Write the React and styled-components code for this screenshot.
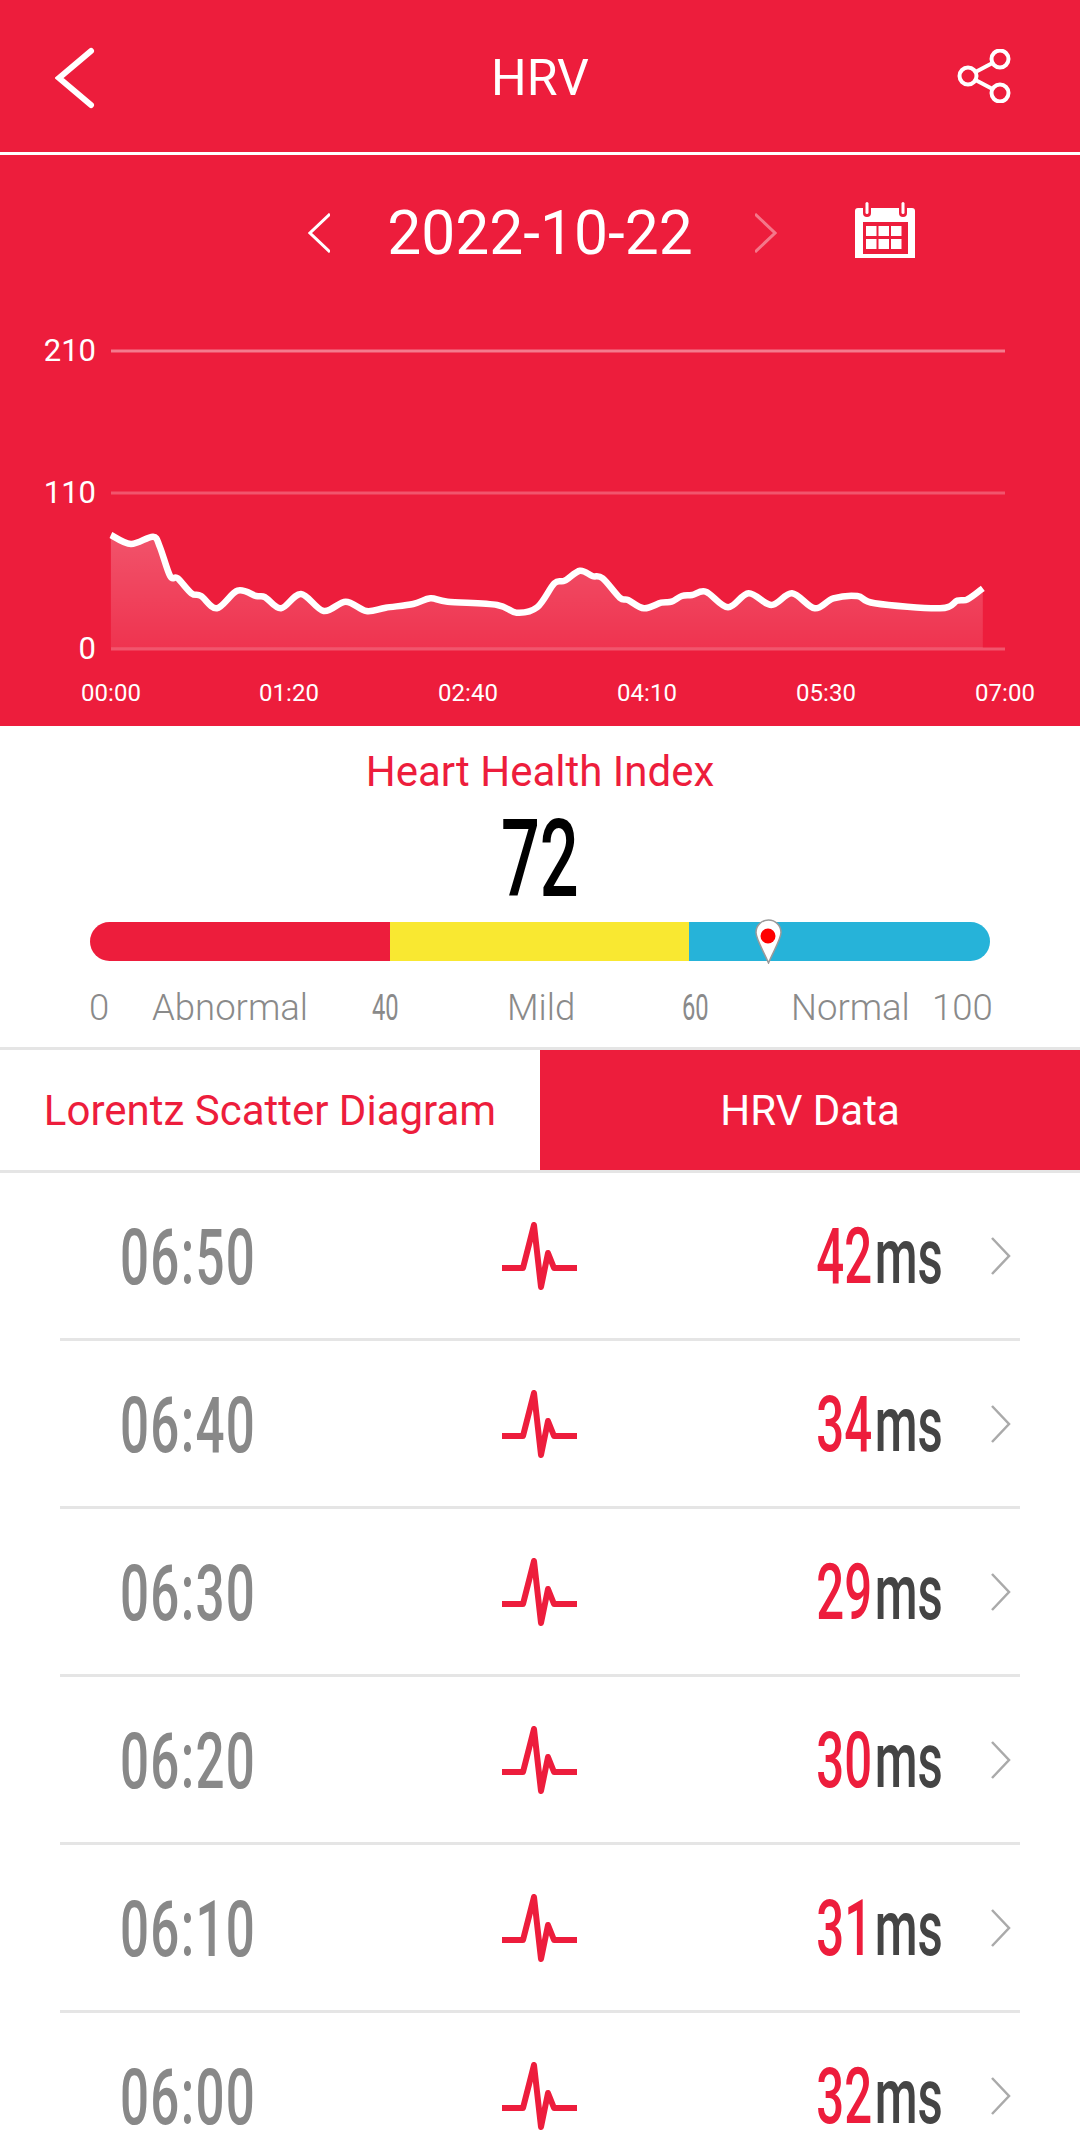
import React from "react";
import styled, { createGlobalStyle } from "styled-components";

const RED = "#ed1d3c";

const GlobalStyle = createGlobalStyle`
  html, body {
    margin: 0;
    padding: 0;
    height: 2143px;
    overflow: hidden;
    background: #fff;
    font-family: Roboto, "Liberation Sans", sans-serif;
  }
`;

const Page = styled.div`
  width: 1080px;
  height: 2143px;
  overflow: hidden;
  background: #fff;
`;

const Header = styled.header`
  height: 152px;
  background: ${RED};
  border-bottom: 3px solid #fff;
  display: grid;
  grid-template-columns: 1fr auto 1fr;
  align-items: center;
  padding: 0 69px;
`;

const BackIcon = styled.svg`
  display: block;
  margin: 4px 0 0 -14px;
`;

const Title = styled.h1`
  margin: 4px 0 0;
  font-size: 50px;
  font-weight: 400;
  color: #fff;
  line-height: 1;
`;

const ShareWrap = styled.div`
  justify-self: end;
  display: flex;
`;

const RedPanel = styled.section`
  background: ${RED};
  height: 571px;
`;

const DateRow = styled.div`
  height: 155px;
  display: grid;
  grid-template-columns: 1fr auto 1fr;
  align-items: center;
  column-gap: 60px;
`;

const DatePrev = styled.div`
  justify-self: end;
  display: flex;
  margin-right: -3px;
`;

const DateText = styled.div`
  font-size: 60.5px;
  line-height: 1;
  color: #fff;
  margin-top: 4px;
`;

const DateNext = styled.div`
  display: flex;
  align-items: center;
  gap: 78px;
  margin-left: 2px;
`;

const Calendar = styled.svg`
  display: block;
  margin-top: -6px;
`;

const ChartSvg = styled.svg`
  display: block;
`;

const AxisLabel = styled.text`
  fill: #fff;
  font-family: Roboto, sans-serif;
  font-size: ${(p) => p.$size}px;
`;

const IndexPanel = styled.section`
  height: 321px;
  padding-top: 22px;
  box-sizing: border-box;
`;

const IndexTitle = styled.div`
  text-align: center;
  color: ${RED};
  font-size: 42px;
  line-height: 48px;
`;

const Narrow = styled.span`
  display: inline-block;
  transform: scaleX(${(p) => p.$x || 0.65});
  transform-origin: ${(p) => p.$origin || "left"} center;
  white-space: nowrap;
`;

const IndexValue = styled.div`
  margin-top: 14px;
  text-align: center;
  font-size: 107px;
  line-height: 100px;
  font-weight: 500;
  color: #000;
`;

const BarWrap = styled.div`
  position: relative;
  margin: 12px 90px 0;
  height: 39px;
`;

const Bar = styled.div`
  display: flex;
  height: 100%;
  border-radius: 20px;
  overflow: hidden;
`;

const Segment = styled.div`
  flex: ${(p) => p.$size} 0 0;
  background: ${(p) => p.$color};
`;

const Pin = styled.svg`
  position: absolute;
  left: ${(p) => p.$left}px;
  top: -3px;
`;

const Legend = styled.div`
  margin: 25px 89px 0;
  display: grid;
  grid-template-columns: 63px 220px 135px 175px 109px 141px 58px;
  color: #8a8a8a;
  font-size: 36.5px;
  line-height: 44px;
  font-weight: 300;
`;

const LegendMark = styled(Narrow)`
  font-weight: 400;
`;

const Tabs = styled.div`
  display: grid;
  grid-template-columns: 1fr 1fr;
  border-top: 3px solid #e5e5e5;
  border-bottom: 3px solid #e5e5e5;
`;

const Tab = styled.div`
  height: 120px;
  display: flex;
  align-items: center;
  justify-content: center;
  font-size: 42px;
  color: ${(p) => (p.$active ? "#fff" : RED)};
  background: ${(p) => (p.$active ? RED : "#fff")};
`;

const List = styled.div`
  padding: 0 60px;
`;

const Row = styled.div`
  height: 165px;
  border-bottom: 3px solid #e5e5e5;
  display: grid;
  grid-template-columns: 1fr auto 1fr;
  align-items: center;
  font-size: 78px;
  line-height: 1;
  font-weight: 500;
`;

const Time = styled.div`
  color: #888;
  padding: 4px 0 0 60px;
  letter-spacing: 2px;
`;

const Pulse = styled.svg`
  display: block;
  margin-left: -2px;
`;

const RowEnd = styled.div`
  display: flex;
  justify-content: flex-end;
  align-items: center;
  padding-right: 9px;
`;

const Value = styled(Narrow)`
  margin-top: 3px;
`;

const Num = styled.span`
  color: ${RED};
`;

const Unit = styled.span`
  color: #444;
  margin-left: 4px;
`;

const Chevron = styled.svg`
  display: block;
  margin-left: ${(p) => p.$gap || 0}px;
`;

const raw = [
  [161, 645], [190, 672], [222, 650], [232, 680], [247, 768], [258, 775], [278, 820], [292, 828],
  [315, 865], [345, 812], [372, 828], [385, 832], [408, 865], [437, 822], [470, 873], [502, 845],
  [532, 873], [560, 863], [600, 852], [625, 835], [650, 845], [722, 855], [750, 878], [780, 862],
  [805, 790], [820, 782], [842, 752], [860, 768], [875, 775], [900, 833], [912, 840], [935, 865],
  [960, 848], [975, 845], [990, 828], [1005, 825], [1025, 815], [1057, 862], [1087, 820], [1120, 855],
  [1150, 820], [1183, 865], [1210, 835], [1245, 828], [1270, 850], [1365, 865], [1390, 842], [1405, 838],
  [1427, 805],
];

// trace points were read off a stretched crop, so scale back to page pixels
const points = raw.map(([x, y]) => [x / 1.452, y / 3 + 320]);

const smoothPath = (pts) => {
  let d = `M${pts[0][0].toFixed(1)} ${pts[0][1].toFixed(1)}`;
  for (let i = 0; i < pts.length - 1; i++) {
    const p0 = pts[i - 1] || pts[i];
    const p1 = pts[i];
    const p2 = pts[i + 1];
    const p3 = pts[i + 2] || p2;
    const c1x = p1[0] + (p2[0] - p0[0]) / 6;
    const c1y = p1[1] + (p2[1] - p0[1]) / 6;
    const c2x = p2[0] - (p3[0] - p1[0]) / 6;
    const c2y = p2[1] - (p3[1] - p1[1]) / 6;
    d += `C${c1x.toFixed(1)} ${c1y.toFixed(1)} ${c2x.toFixed(1)} ${c2y.toFixed(1)} ${p2[0].toFixed(1)} ${p2[1].toFixed(1)}`;
  }
  return d;
};

const linePath = smoothPath(points);
const firstX = points[0][0].toFixed(1);
const lastX = points[points.length - 1][0].toFixed(1);
const areaPath = `${linePath}L${lastX} 648L${firstX} 648Z`;

const gridLines = [
  { y: 351, label: "210", opacity: 0.42 },
  { y: 493, label: "110", opacity: 0.25 },
  { y: 649, label: "0", opacity: 0.25 },
];

const timeLabels = [
  ["00:00", 111],
  ["01:20", 289],
  ["02:40", 468],
  ["04:10", 647],
  ["05:30", 826],
  ["07:00", 1005],
];

const rows = [
  ["06:50", 42],
  ["06:40", 34],
  ["06:30", 29],
  ["06:20", 30],
  ["06:10", 31],
  ["06:00", 32],
];

const Chart = () => (
  <ChartSvg width="1080" height="416" viewBox="0 310 1080 416">
    <defs>
      <linearGradient id="area" x1="0" y1="0" x2="0" y2="1">
        <stop offset="0" stopColor="#fff" stopOpacity="0.24" />
        <stop offset="1" stopColor="#fff" stopOpacity="0.1" />
      </linearGradient>
    </defs>
    {gridLines.map((g) => (
      <g key={g.label}>
        <line x1="111" x2="1005" y1={g.y} y2={g.y} stroke="#fff" strokeOpacity={g.opacity} strokeWidth="3" />
        <AxisLabel $size={31} x="96" y={g.y + 10} textAnchor="end">
          {g.label}
        </AxisLabel>
      </g>
    ))}
    <path d={areaPath} fill="url(#area)" />
    <path d={linePath} fill="none" stroke="#fff" strokeWidth="6.5" strokeLinejoin="round" />
    {timeLabels.map(([t, x]) => (
      <AxisLabel key={t} $size={24} x={x} y="701" textAnchor="middle">
        {t}
      </AxisLabel>
    ))}
  </ChartSvg>
);

const ShareIcon = () => (
  <svg width="54" height="54" viewBox="0 0 54 54" fill="none" stroke="#fff" strokeWidth="4">
    <circle cx="43" cy="10" r="8.5" />
    <circle cx="11" cy="27" r="8.5" />
    <circle cx="43" cy="44" r="8.5" />
    <path d="M18.5 23L35.5 14M18.5 31L35.5 40" />
  </svg>
);

const CalendarIcon = () => (
  <Calendar width="60" height="56" viewBox="0 0 60 56">
    <path d="M3 6H57a3 3 0 0 1 3 3V56H0V9a3 3 0 0 1 3-3Z" fill="#fff" />
    <rect x="8" y="20" width="45" height="32" fill={RED} />
    {[11, 23.5, 36].map((x) =>
      [24, 37].map((y) => <rect key={`${x}-${y}`} x={x} y={y} width="10.5" height="10" fill="#fff" />)
    )}
    <rect x="8" y="0" width="8" height="15" rx="4" fill={RED} />
    <rect x="44" y="0" width="8" height="15" rx="4" fill={RED} />
    <rect x="10.5" y="0" width="3" height="12" rx="1.5" fill="#fff" />
    <rect x="46.5" y="0" width="3" height="12" rx="1.5" fill="#fff" />
  </Calendar>
);

const PulseIcon = () => (
  <Pulse width="75" height="68" viewBox="0 0 75 68" fill="none">
    <path
      d="M0 46H21L32 3L39 65L46 31L52 46H75"
      stroke={RED}
      strokeWidth="6"
      strokeLinejoin="round"
    />
  </Pulse>
);

const MapPin = () => (
  <Pin $left={665} width="27" height="45" viewBox="0 0 27 45">
    <path
      d="M13.5 1C6.5 1 1 6.5 1 13.5C1 20 9 33 13.5 44C18 33 26 20 26 13.5C26 6.5 20.5 1 13.5 1Z"
      fill="#fff"
      stroke="#9a9a9a"
      strokeWidth="1.5"
    />
    <circle cx="13" cy="17" r="7.5" fill="#f00" />
  </Pin>
);

const App = () => (
  <Page>
    <GlobalStyle />
    <Header>
      <BackIcon width="40" height="62" viewBox="0 0 40 62" fill="none" stroke="#fff" strokeWidth="6" strokeLinecap="round">
        <path d="M36 4L4 31L36 58" />
      </BackIcon>
      <Title>HRV</Title>
      <ShareWrap>
        <ShareIcon />
      </ShareWrap>
    </Header>

    <RedPanel>
      <DateRow>
        <DatePrev>
          <svg width="22" height="40" viewBox="0 0 22 40" fill="none" stroke="#fff" strokeWidth="3">
            <path d="M22 1L2 20L22 39" />
          </svg>
        </DatePrev>
        <DateText>2022-10-22</DateText>
        <DateNext>
          <svg width="22" height="40" viewBox="0 0 22 40" fill="none" stroke="#fff" strokeOpacity="0.4" strokeWidth="3">
            <path d="M0 1L20 20L0 39" />
          </svg>
          <CalendarIcon />
        </DateNext>
      </DateRow>
      <Chart />
    </RedPanel>

    <IndexPanel>
      <IndexTitle>Heart Health Index</IndexTitle>
      <IndexValue>
        <Narrow $x={0.64} $origin="center">
          72
        </Narrow>
      </IndexValue>
      <BarWrap>
        <Bar>
          <Segment $size={300} $color={RED} />
          <Segment $size={299} $color="#f9e831" />
          <Segment $size={301} $color="#26b3d9" />
        </Bar>
        <MapPin />
      </BarWrap>
      <Legend>
        <span>0</span>
        <span>Abnormal</span>
        <LegendMark>40</LegendMark>
        <span>Mild</span>
        <LegendMark>60</LegendMark>
        <span>Normal</span>
        <span>100</span>
      </Legend>
    </IndexPanel>

    <Tabs>
      <Tab>Lorentz Scatter Diagram</Tab>
      <Tab $active>HRV Data</Tab>
    </Tabs>

    <List>
      {rows.map(([time, value]) => (
        <Row key={time}>
          <Time>
            <Narrow $x={0.655}>{time}</Narrow>
          </Time>
          <PulseIcon />
          <RowEnd>
            <Value $x={0.63} $origin="right">
              <Num>{value}</Num>
              <Unit>ms</Unit>
            </Value>
            <Chevron $gap={48} width="20" height="38" viewBox="0 0 20 38" fill="none" stroke="#aaa" strokeWidth="2.5">
              <path d="M1 1L18 19L1 37" />
            </Chevron>
          </RowEnd>
        </Row>
      ))}
    </List>
  </Page>
);

export default App;
